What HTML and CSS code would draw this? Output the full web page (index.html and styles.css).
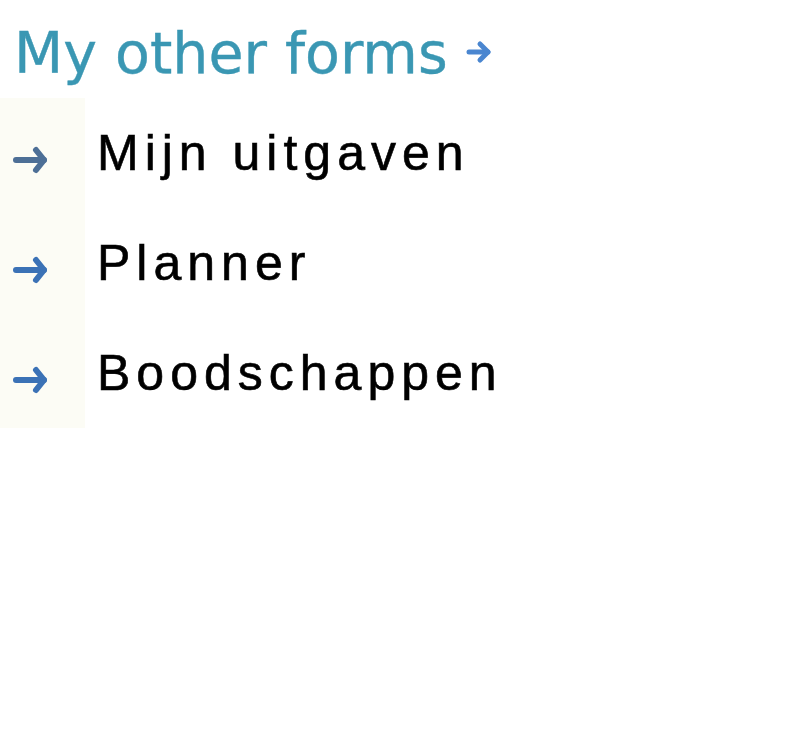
FILE: index.html
```html
<!DOCTYPE html>
<html lang="en">
<head>
<meta charset="utf-8">
<title>My other forms</title>
<link rel="stylesheet" href="styles.css">
</head>
<body>
<h1 class="title">My other forms <svg class="title-arrow" viewBox="0 0 26 24" width="26" height="24" aria-hidden="true"><path d="M3 12 H22" /><path d="M14 4 L22 12 L14 20" /></svg></h1>
<ul class="links">
  <li class="link">
    <span class="bullet"><svg class="bullet-arrow bullet-arrow--grey" viewBox="0 0 36 30" width="36" height="30" aria-hidden="true"><path d="M4 15 H32" /><path d="M24 5 L32 15 L24 25" /></svg></span>
    <a class="label" href="#">Mijn uitgaven</a>
  </li>
  <li class="link">
    <span class="bullet"><svg class="bullet-arrow" viewBox="0 0 36 30" width="36" height="30" aria-hidden="true"><path d="M4 15 H32" /><path d="M24 5 L32 15 L24 25" /></svg></span>
    <a class="label" href="#">Planner</a>
  </li>
  <li class="link">
    <span class="bullet"><svg class="bullet-arrow" viewBox="0 0 36 30" width="36" height="30" aria-hidden="true"><path d="M4 15 H32" /><path d="M24 5 L32 15 L24 25" /></svg></span>
    <a class="label" href="#">Boodschappen</a>
  </li>
</ul>
</body>
</html>
```
FILE: styles.css
```css
html, body {
  margin: 0;
  padding: 0;
  background: #ffffff;
}

.title {
  margin: 0;
  padding: 19px 0 0 14px;
  font-family: "DejaVu Sans", Verdana, sans-serif;
  font-weight: normal;
  font-size: 57px;
  line-height: 68px;
  color: #3a97b3;
  white-space: nowrap;
  -webkit-text-stroke: 0.4px #3a97b3;
}

.title-arrow {
  vertical-align: 9px;
  fill: none;
  stroke: #4a86d0;
  stroke-width: 5;
  stroke-linecap: round;
  stroke-linejoin: round;
}

.links {
  list-style: none;
  margin: 11px 0 0 0;
  padding: 0;
}

.link {
  display: flex;
  align-items: center;
  height: 110px;
}

.bullet {
  display: flex;
  align-items: center;
  align-self: stretch;
  width: 85px;
  padding-left: 12px;
  box-sizing: border-box;
  margin-right: 12px;
  background: #fcfcf5;
}

.bullet-arrow {
  margin-top: 14px;
  fill: none;
  stroke: #3b72b6;
  stroke-width: 6;
  stroke-linecap: round;
  stroke-linejoin: round;
}

.bullet-arrow--grey {
  stroke: #4d6f96;
}

.label {
  font-family: "Liberation Sans", Arial, sans-serif;
  font-size: 50px;
  line-height: 110px;
  letter-spacing: 6px;
  color: #000000;
  text-decoration: none;
  -webkit-text-stroke: 0.6px #000000;
}
```
